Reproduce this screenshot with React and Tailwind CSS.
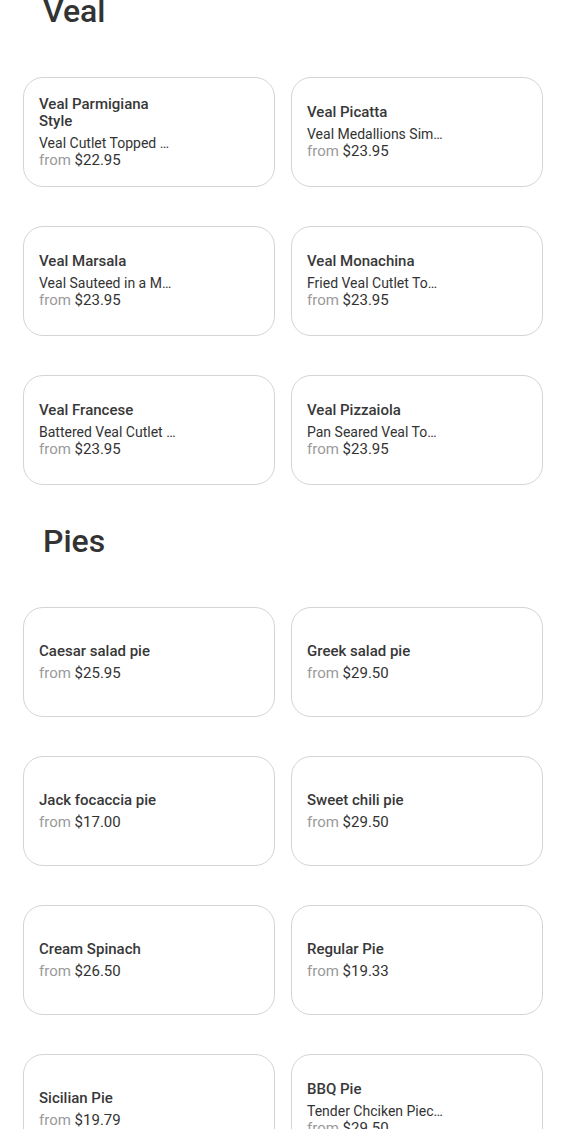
import React from "react";

const sections = [
  {
    title: "Veal",
    items: [
      { name: "Veal Parmigiana Style", desc: "Veal Cutlet Topped with Tomato Sauce and Mozzarella", price: "$22.95" },
      { name: "Veal Picatta", desc: "Veal Medallions Simmered in Lemon Butter", price: "$23.95" },
      { name: "Veal Marsala", desc: "Veal Sauteed in a Marsala Wine Sauce", price: "$23.95" },
      { name: "Veal Monachina", desc: "Fried Veal Cutlet Topped with Eggplant", price: "$23.95" },
      { name: "Veal Francese", desc: "Battered Veal Cutlet in Lemon Sauce", price: "$23.95" },
      { name: "Veal Pizzaiola", desc: "Pan Seared Veal Topped with Pizzaiola Sauce", price: "$23.95" },
    ],
  },
  {
    title: "Pies",
    items: [
      { name: "Caesar salad pie", price: "$25.95" },
      { name: "Greek salad pie", price: "$29.50" },
      { name: "Jack focaccia pie", price: "$17.00" },
      { name: "Sweet chili pie", price: "$29.50" },
      { name: "Cream Spinach", price: "$26.50" },
      { name: "Regular Pie", price: "$19.33" },
      { name: "Sicilian Pie", price: "$19.79" },
      { name: "BBQ Pie", desc: "Tender Chciken Pieces with BBQ Sauce", price: "$29.50" },
    ],
  },
];

function Card({ item }) {
  return (
    <div className="h-[110px] rounded-[20px] border border-[#d4d4d4] bg-white px-[15px] flex items-center">
      <div className="w-[137px] flex flex-col">
        <div className="text-[15px] leading-[17px] font-medium text-[#383838] mb-[5px]">{item.name}</div>
        {item.desc && (
          <div className="text-[14px] leading-[17px] text-[#333333] truncate">{item.desc}</div>
        )}
        <div className="text-[15px] leading-[17px] text-[#333333] whitespace-nowrap">
          <span className="text-[#9a9a9a]">from </span>
          {item.price}
        </div>
      </div>
    </div>
  );
}

export default function App() {
  return (
    <div
      className="bg-white min-h-screen pl-[23px] pr-[32px] -mt-[9px]"
      style={{ fontFamily: "Roboto, 'Liberation Sans', sans-serif" }}
    >
      {sections.map((s, i) => (
        <section key={s.title} className={i > 0 ? "mt-9" : ""}>
          <h2 className="ml-5 text-[32px] leading-[40px] font-medium text-[#333333]">{s.title}</h2>
          <div className="mt-[46px] grid grid-cols-2 gap-x-4 gap-y-[39px]">
            {s.items.map((it) => (
              <Card key={it.name} item={it} />
            ))}
          </div>
        </section>
      ))}
    </div>
  );
}
